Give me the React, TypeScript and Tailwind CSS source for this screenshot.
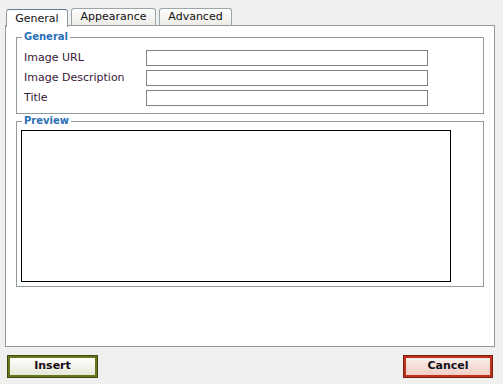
import React from "react";

const font = { fontFamily: '"DejaVu Sans", Verdana, Tahoma, sans-serif' };

function Tab({ label, active, w }: { label: string; active?: boolean; w: string }) {
  return (
    <div
      className={
        "h-[17px] flex items-center justify-center rounded-t-[3px] border border-b-0 text-[11px] text-[#111] pt-px " +
        w +
        " " +
        (active
          ? "bg-white border-[#919b9c] border-t-[#5c7a99] relative top-px h-[18px]"
          : "bg-gradient-to-b from-white to-[#ecebe6] border-[#9aa6ab]")
      }
    >
      {label}
    </div>
  );
}

function Row({ label }: { label: string }) {
  return (
    <div className="flex items-center h-[20px]">
      <div className="w-[122px] text-[11px] text-[#3a1838]">{label}</div>
      <div className="w-[282px] h-[16px] border border-[#7f7f7f] bg-white" />
    </div>
  );
}

export default function App() {
  return (
    <div className="w-[503px] h-[384px] bg-[#f0f0ee] flex flex-col" style={font}>
      <div className="flex gap-[3px] pl-[6px] pt-[8px] h-[25px] items-start">
        <Tab label="General" active w="w-[62px]" />
        <Tab label="Appearance" w="w-[85px]" />
        <Tab label="Advanced" w="w-[73px]" />
      </div>
      <div className="ml-[5px] w-[490px] h-[322px] border border-[#919b9c] bg-white pl-[10px] pt-[5px]">
        <fieldset className="w-[468px] border border-[#919b9c] pl-[7px] pb-[5px] pt-[5px]">
          <legend className="-ml-[2px] px-[2px] text-[10px] leading-[12px] font-bold text-[#2b6fb6]">General</legend>
          <Row label="Image URL" />
          <Row label="Image Description" />
          <Row label="Title" />
        </fieldset>
        <fieldset className="mt-[1px] w-[468px] border border-[#919b9c] pl-[4px] pb-[4px] pt-[3px]">
          <legend className="ml-[1px] px-[2px] text-[10px] leading-[12px] font-bold text-[#2b6fb6]">Preview</legend>
          <div className="w-[430px] h-[152px] border border-black bg-white" />
        </fieldset>
      </div>
      <div className="flex justify-between pl-[8px] pr-[11px] pt-[9px]">
        <button className="w-[89px] h-[21px] border-2 border-[#66761c] bg-gradient-to-b from-white to-[#e6e8d8] text-[11px] font-bold text-[#1a0a10] shadow-[0_0_0_1px_#3f4a10]">
          Insert
        </button>
        <button className="w-[88px] h-[21px] border-2 border-[#c0321a] bg-gradient-to-b from-[#fbeeea] to-[#f2cfc6] text-[11px] font-bold text-[#101020] shadow-[0_0_0_1px_#7a2010]">
          Cancel
        </button>
      </div>
    </div>
  );
}
